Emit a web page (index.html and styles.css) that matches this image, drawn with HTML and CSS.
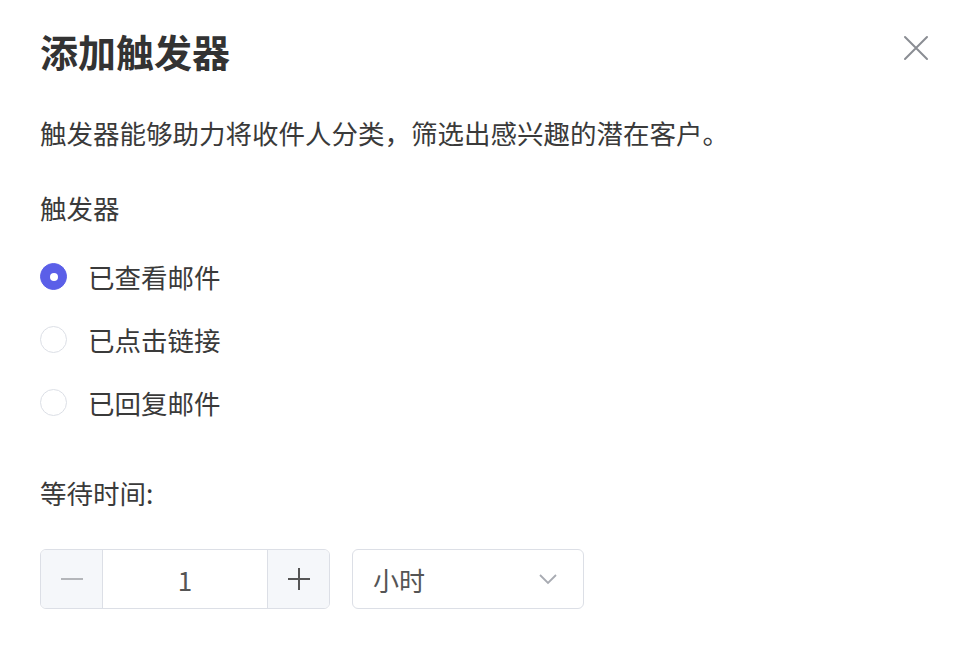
FILE: index.html
```html
<!DOCTYPE html>
<html lang="zh-CN">
<head>
<meta charset="utf-8">
<title>添加触发器</title>
<link rel="stylesheet" href="styles.css">
</head>
<body>
<div class="dialog">
  <div class="header">
    <h1 class="title">添加触发器</h1>
    <span class="close" aria-label="关闭">
      <svg width="26" height="26" viewBox="0 0 26 26"><path d="M2 2 L24 24 M24 2 L2 24" stroke="#8a8d93" stroke-width="2" fill="none" stroke-linecap="round"/></svg>
    </span>
  </div>
  <p class="desc">触发器能够助力将收件人分类，筛选出感兴趣的潜在客户。</p>
  <div class="label">触发器</div>
  <div class="radios">
    <label class="radio"><span class="dot checked"></span><span class="rtext">已查看邮件</span></label>
    <label class="radio"><span class="dot"></span><span class="rtext">已点击链接</span></label>
    <label class="radio"><span class="dot"></span><span class="rtext">已回复邮件</span></label>
  </div>
  <div class="label wait">等待时间:</div>
  <div class="controls">
    <div class="number">
      <span class="btn minus"><svg width="24" height="24" viewBox="0 0 24 24"><path d="M1 12 H23" stroke="#b4b6ba" stroke-width="2"/></svg></span>
      <span class="value">1</span>
      <span class="btn plus"><svg width="24" height="24" viewBox="0 0 24 24"><path d="M1 12 H23 M12 1 V23" stroke="#555" stroke-width="2"/></svg></span>
    </div>
    <div class="select">
      <span class="stext">小时</span>
      <svg width="20" height="12" viewBox="0 0 20 12"><path d="M2 2 L10 10 L18 2" stroke="#a8abb2" stroke-width="1.8" fill="none"/></svg>
    </div>
  </div>
</div>
</body>
</html>
```
FILE: styles.css
```css
* { box-sizing: border-box; }
html, body { margin: 0; padding: 0; background: #fff; }
body {
  font-family: "Noto Sans CJK SC", "Noto Sans", "Liberation Sans", sans-serif;
  color: #333;
}
.dialog {
  width: 975px;
  height: 661px;
  padding: 25px 46px 0 40px;
}
.header {
  display: flex;
  justify-content: space-between;
  align-items: center;
  height: 52px;
}
.title {
  margin: 0;
  font-size: 38px;
  line-height: 52px;
  font-weight: 700;
  color: #333;
}
.close {
  display: flex;
  width: 26px;
  height: 26px;
  margin-top: -6px;
}
.desc {
  margin: 36px 0 0;
  font-size: 26.5px;
  line-height: 40px;
  color: #3a3a3a;
}
.label {
  margin-top: 35px;
  font-size: 26.5px;
  line-height: 40px;
  color: #3a3a3a;
}
.radios {
  margin-top: 17px;
  display: flex;
  flex-direction: column;
}
.radio {
  display: flex;
  align-items: center;
  height: 63px;
}
.dot {
  width: 27px;
  height: 27px;
  border-radius: 50%;
  border: 1.5px solid #dcdfe6;
  background: #fff;
  display: flex;
  align-items: center;
  justify-content: center;
}
.dot.checked {
  border-color: #5b5fe8;
  background: #5b5fe8;
}
.dot.checked::after {
  content: "";
  width: 8px;
  height: 8px;
  border-radius: 50%;
  background: #fff;
}
.rtext {
  margin-left: 21px;
  font-size: 26.5px;
  line-height: 40px;
  color: #3a3a3a;
}
.label.wait { margin-top: 39px; }
.controls {
  margin-top: 36px;
  display: flex;
  gap: 22px;
}
.number {
  display: flex;
  width: 290px;
  height: 60px;
  border: 1px solid #dcdfe6;
  border-radius: 6px;
  overflow: hidden;
}
.btn {
  width: 62px;
  background: #f5f7fa;
  display: flex;
  align-items: center;
  justify-content: center;
}
.minus { border-right: 1px solid #dcdfe6; }
.plus { border-left: 1px solid #dcdfe6; }
.value {
  flex: 1;
  display: flex;
  align-items: center;
  justify-content: center;
  font-size: 26px;
  color: #555;
}
.select {
  width: 232px;
  height: 60px;
  border: 1px solid #dcdfe6;
  border-radius: 6px;
  display: flex;
  align-items: center;
  justify-content: space-between;
  padding: 0 25px 0 20px;
}
.stext {
  font-size: 26px;
  color: #555;
}
```
